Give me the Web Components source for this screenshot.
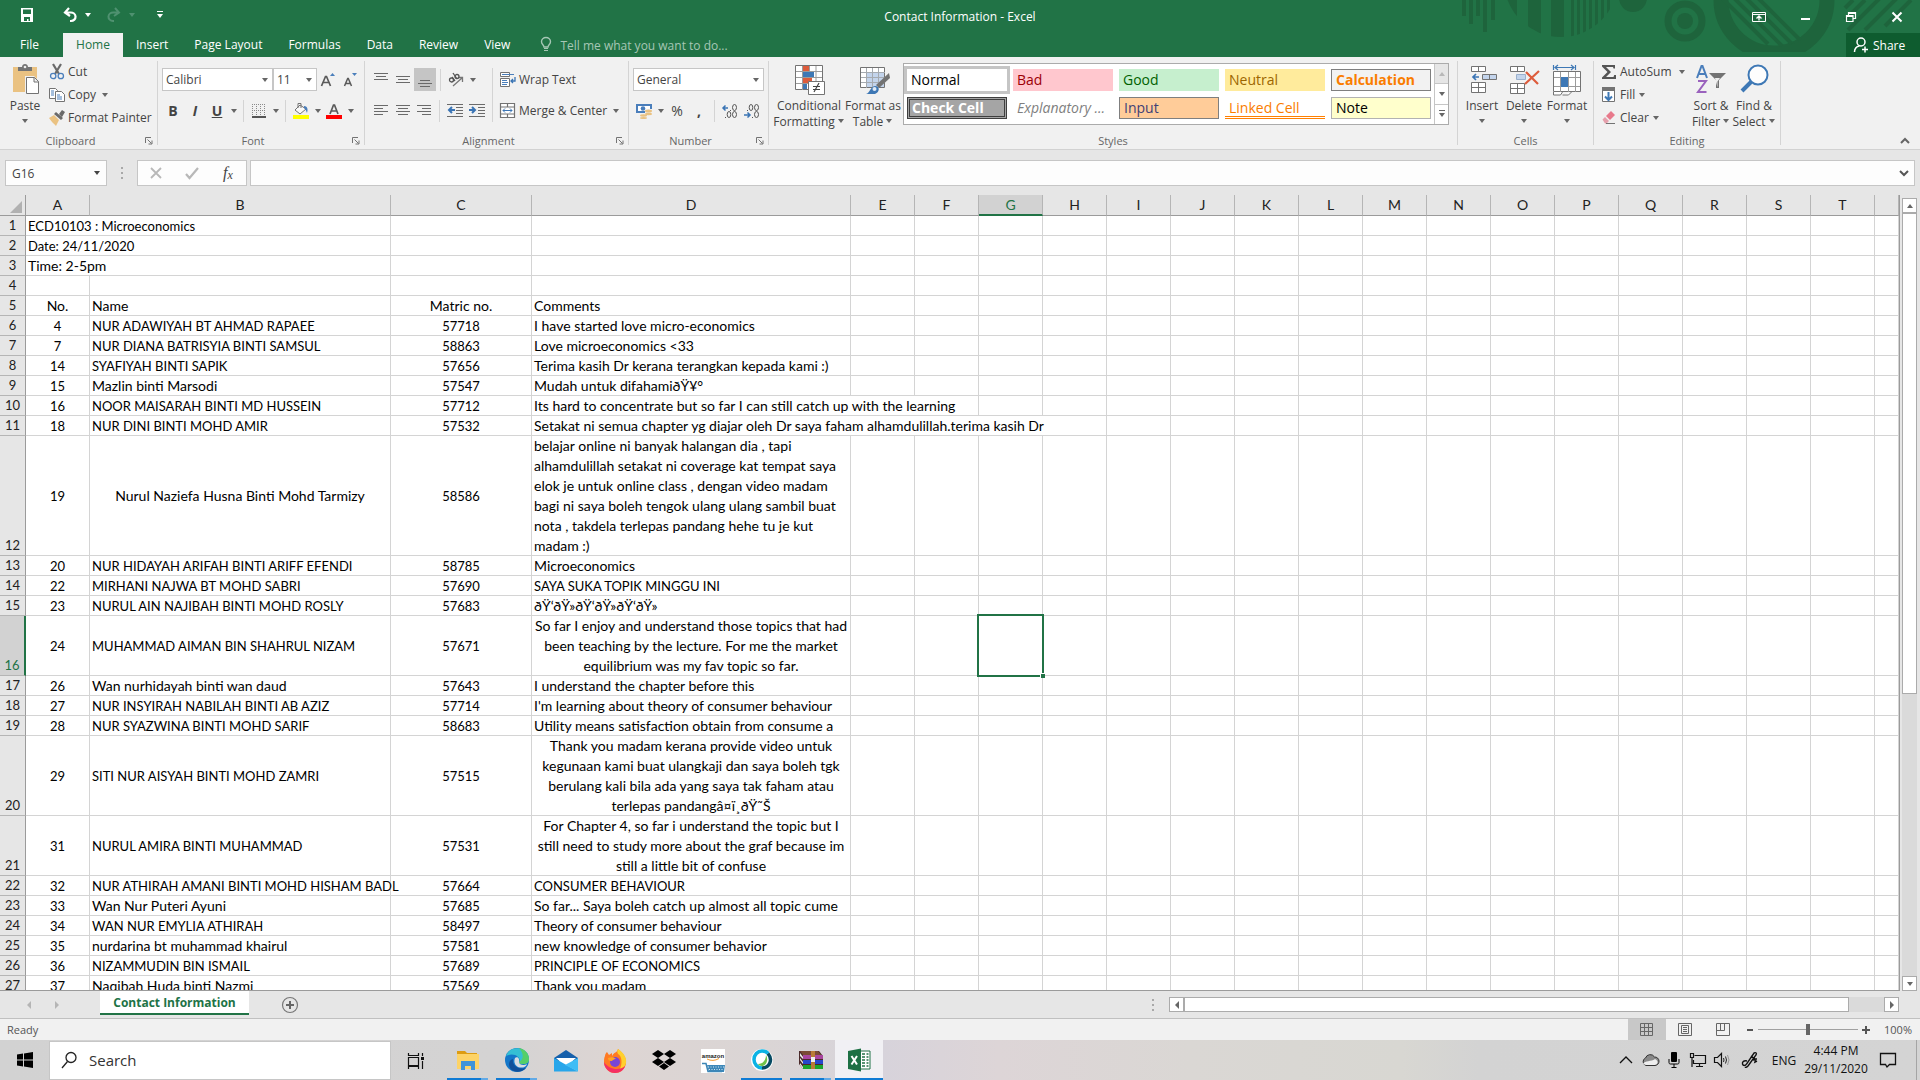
<!DOCTYPE html>
<html lang="en">
<head>
<meta charset="utf-8">
<title>Contact Information - Excel</title>
<style>
  html, body {
    margin: 0;
    height: 100%;
  }

  body {
    font-family: "Open Sans", "Noto Sans", sans-serif;
    font-size: 12px;
    color: #444444;
    overflow: hidden;
  }
</style>
</head>
<body>
<excel-app></excel-app>

<script>
  // ---------- icons ----------

  // name: [width, height, markup]
  const lines = (rows, color = '#6a6a6a') =>
    rows.map(([x, y, w]) => `<rect x="${x}" y="${y}" width="${w}" height="1" fill="${color}"/>`).join('');

  const ICONS = {
    save: [16, 16, '<path d="M2 1h12v14H2z" fill="#fff"/><path d="M4 2.5h8v4.5H4zM5 10h6v4H9.5v-2H8v2H5z" fill="#217346"/>'],
    undo: [16, 16, '<path d="M7 1 3 5.5 8 9M3.5 5.5h5a4.5 4 0 0 1 .5 8.5H8" fill="none" stroke="#fff" stroke-width="2.2"/>'],
    redo: [16, 16, '<path d="m9 1 4 4.5L8 9m4.500-3.500h-5a4.5 4 0 0 0-.5 8.5h1" fill="none" stroke="#4f9170" stroke-width="2"/>'],
    more: [8, 8, '<path d="M1 0h6v1H1zM1 3h6L4 7z" fill="#fff"/>'],
    down: [8, 8, '<path d="M1 2h6L4 6z" fill="currentColor"/>'],
    up: [8, 8, '<path d="M1 6h6L4 2z" fill="currentColor"/>'],
    left: [8, 10, '<path d="M6 1v8L2 5z" fill="currentColor"/>'],
    right: [8, 10, '<path d="M2 1v8l4-4z" fill="currentColor"/>'],
    downline: [8, 8, '<path d="M1 0h6v1H1zM1 3h6L4 7z" fill="#666"/>'],
    bulb: [12, 16, '<path d="M4 10c0-2-2.500-2.500-2.500-5.200a4.5 4.3 0 0 1 9 0C10.5 7.5 8 8 8 10z" fill="none" stroke="#a6c7b5" stroke-width="1.4"/><path d="M4 11h4v1H4zm0 2h4v1H4z" fill="#a6c7b5"/>'],
    ribbonopts: [14, 12, '<path d="M.5 1.5h13v9H.5zM.5 3.5h13" fill="none" stroke="#fff"/><path d="M7 9.5V5.5M4.5 7.5 7 5l2.5 2.5" fill="none" stroke="#fff" stroke-width="1.3"/>'],
    min: [10, 10, '<path d="M1 6h9v2H1z" fill="#fff"/>'],
    restore: [12, 12, '<path d="M3.5 4V1.5h7v6H8M1.5 4.5H8v6H1.5zM1.5 5.5H8M3.5 2.5h7" fill="none" stroke="#fff" stroke-width="1.2"/>'],
    close: [12, 12, '<path d="m1.5 1.5 9 9m0-9-9 9" stroke="#fff" stroke-width="2"/>'],
    share: [16, 16, '<circle cx="8" cy="5" r="4" fill="none" stroke="#fff" stroke-width="1.5"/><path d="M1.5 15c0-3.500 2-5.500 5-6M9 12.5h6M12 9.5v6" fill="none" stroke="#fff" stroke-width="1.5"/>'],
    paste: [32, 32, '<path d="M4 3h24v25H4z" fill="#eac282"/><path d="M9 3h4c0-4 6-4 6 0h4v4H9z" fill="#737373"/><circle cx="16" cy="3" r="1.3" fill="#eee"/><path d="M16 12h9l5 5v14H16z" fill="#f1f1f1"/><path d="M17.5 13.5h8l4 4v12h-12zM25 13.5v4.5h4.5" fill="#fff" stroke="#737373"/>'],
    cut: [16, 16, '<path d="m4 0 6 10M12 0 6 10" stroke="#6a6a6a" stroke-width="2.2"/><circle cx="4.2" cy="12" r="2.7" fill="none" stroke="#4a7ebb" stroke-width="1.3"/><circle cx="11.8" cy="12" r="2.7" fill="none" stroke="#4a7ebb" stroke-width="1.3"/>'],
    copy: [16, 16, '<path d="M.5 1.5h6l2 2v8h-8z" fill="#fff" stroke="#737373"/><path d="M6.5 4.5h6l3 3v7h-9z" fill="#fff" stroke="#737373"/><path d="M2 4h3M2 6h3M2 8h3M8 8h3M8 10h5M8 12h5" stroke="#4a7ebb"/>'],
    painter: [16, 16, '<path d="m0 8 5-3 5 5-3 6C5 14 2 11 0 8z" fill="#eac282"/><path d="m5 4 2-2 7 6-2 2zm5 0 3-4 3 2-3 5z" fill="#6a6a6a"/>'],
    grow: [16, 16, '<path d="M10 4h5l-2.500-3z" fill="#4a7ebb"/><path d="M1.5 14 5.5 4.5h1L10.5 14M3 10.5h6" fill="none" stroke="#5a5a5a" stroke-width="1.7"/>'],
    shrink: [16, 16, '<path d="M10 1h5l-2.500 3z" fill="#4a7ebb"/><path d="M2.5 14 5.7 6.5h.6L9.5 14M3.7 11.5h4.6" fill="none" stroke="#5a5a5a" stroke-width="1.5"/>'],
    borders: [14, 14, '<path d="M.5 0v13M4.5 0v13M8.5 0v13M12.5 0v13M0 .5h13M0 6.5h13" stroke="#8a8a8a" stroke-dasharray="1 1" fill="none"/><path d="M0 13h14" stroke="#555" stroke-width="2"/>'],
    fillcolor: [16, 18, '<path d="M0 13h16v4H0z" fill="#ff0"/><path d="M7 3 2 8l5 4 6-5zM5 6V1.5h3V6" fill="#fafafa" stroke="#737373"/><path d="M11 4c4 0 4 4 3 7-1-2-1-4-3-5z" fill="#4a7ebb"/>'],
    fontcolor: [16, 18, '<path d="M0 13h16v4H0z" fill="#f00"/><path d="M4 12 7.5 3h1L12 12M5.5 9h5" fill="none" stroke="#5a5a5a" stroke-width="1.7"/>'],
    altop: [16, 16, lines([[1, 1, 14], [3, 4, 10], [1, 7, 14]])],
    almid: [16, 16, lines([[1, 4, 14], [3, 7, 10], [1, 10, 14]])],
    albot: [16, 16, lines([[3, 8, 10], [1, 11, 14], [3, 14, 10]])],
    alleft: [16, 16, lines([[1, 2, 14], [1, 5, 9], [1, 8, 14], [1, 11, 9]])],
    alcenter: [16, 16, lines([[1, 2, 14], [3, 5, 10], [1, 8, 14], [3, 11, 10]])],
    alright: [16, 16, lines([[1, 2, 14], [6, 5, 9], [1, 8, 14], [6, 11, 9]])],
    orient: [16, 16, '<path d="m5 14 9-8M10 5.5h4.5V10" fill="none" stroke="#777" stroke-width="1.3"/><g fill="none" stroke="#555" stroke-width="1.3"><circle cx="3.5" cy="8" r="2"/><path d="m4 5 3 4"/><circle cx="9" cy="4.5" r="2"/><path d="m5 1 4 6"/></g>'],
    outdent: [16, 16, lines([[0, 1, 16], [9, 4, 7], [9, 7, 7], [9, 10, 7], [0, 13, 16]]) + '<path d="M8 7H2m3-3L2 7l3 3" fill="none" stroke="#3a74b4" stroke-width="2"/>'],
    indent: [16, 16, lines([[0, 1, 16], [9, 4, 7], [9, 7, 7], [9, 10, 7], [0, 13, 16]]) + '<path d="M0 7h6M3 4l3 3-3 3" fill="none" stroke="#3a74b4" stroke-width="2"/>'],
    wrap: [16, 16, '<path d="M.5.5h9v4h-9zM.5 6.5h9v8h-9z" fill="#fff" stroke="#737373"/><path d="M2 2.5h12M2 8.5h5M2 10.5h6M2 12.5h5" stroke="#4a7ebb"/><path d="M15 5v4h-4m2-2-2 2 2 2" fill="none" stroke="#3a74b4" stroke-width="1.3"/>'],
    merge: [16, 16, '<path d="M.5.5h14v14H.5zM.5 4h14M.5 11h14M7.5.5V4M7.5 11v3.5" fill="#fff" stroke="#737373" stroke-width="1.2"/><path d="M3 7.5h9M5 5.5l-2 2 2 2m5-4 2 2-2 2" fill="none" stroke="#3a74b4"/>'],
    currency: [16, 16, '<path d="M0 1h16v9H0z" fill="#4a7ebb"/><path d="M2 3h12v5H2z" fill="#fff"/><circle cx="7" cy="5.5" r="2.3" fill="#4a7ebb"/><path d="M9 6h7v9H4v-4h5z" fill="#f1f1f1"/><g fill="#eac282"><ellipse cx="12.5" cy="8" rx="3.5" ry="1.5"/><ellipse cx="12.5" cy="11" rx="3.5" ry="1.2"/><ellipse cx="7.5" cy="12.5" rx="3.5" ry="1.2"/><ellipse cx="7.5" cy="15" rx="3.5" ry="1"/></g>'],
    incdec: [16, 16, '<path d="M6 5H1m2.500-2.500L1 5l2.5 2.5" fill="none" stroke="#3a74b4" stroke-width="1.5"/><g fill="none" stroke="#555"><ellipse cx="12.5" cy="4.5" rx="2" ry="3"/><ellipse cx="7" cy="11.5" rx="1.8" ry="3"/><ellipse cx="12.5" cy="11.5" rx="2" ry="3"/></g><path d="M8 7h1v1H8zM3 14h1v1H3z" fill="#555"/>'],
    decdec: [16, 16, '<path d="M0 12h6M3.5 9.5 6 12l-2.500 2.5" fill="none" stroke="#3a74b4" stroke-width="1.5"/><g fill="none" stroke="#555"><ellipse cx="12.5" cy="4.5" rx="2" ry="3"/><ellipse cx="7" cy="4.5" rx="1.8" ry="3"/><ellipse cx="12.5" cy="11.5" rx="2" ry="3"/></g><path d="M3 7h1v1H3zM8 14h1v1H8z" fill="#555"/>'],
    condfmt: [32, 32, '<path d="M2.5 1.5h27v24h-27z" fill="#fff" stroke="#737373"/><path d="M9.5 2v24M16.5 2v24M23 2v24M3 7.5h26M3 13.5h26M3 19.5h26" stroke="#9b9b9b"/><path d="M10 2h6v5h-6zM10 14h9v5h-9z" fill="#dd5c3c"/><path d="M10 8h11v5H10zM10 20h4v5h-4z" fill="#3e78b5"/><path d="M15.5 17.5h16v13h-16z" fill="#fff" stroke="#737373"/><path d="M20 22.5h7M20 25.5h7M26 19l-5 9" stroke="#444" stroke-width="1.2"/>'],
    fmttable: [32, 32, '<path d="M3.5 3.5h24v20h-24z" fill="#fff" stroke="#737373"/><path d="M9 9h18v14H9z" fill="#c3d4ec"/><path d="M9.5 4v20M15.5 4v20M21.5 4v20M4 8.5h24M4 13.5h24M4 18.5h24" stroke="#a5aab0"/><path d="m32 9 1 5-11 10-3-3z" fill="#737373"/><path d="m9 30c4-1 4-7 9-8 5 0 5 6 0 8z" fill="#3e78b5"/><circle cx="17.5" cy="25" r="2" fill="#dfe9f5"/>'],
    insert: [32, 32, '<path d="M5.5 2.5h14v5h-14zM12.5 2.5v5M5.5 18.5h14v10h-14zM12.5 18.5v10M5.5 23.5h14" fill="#fff" stroke="#737373"/><path d="M16.5 10.5h14v5h-14zM23.5 10.5v5" fill="#c3d4ec" stroke="#737373"/><path d="M13 13H7m3-3-3 3 3 3" fill="none" stroke="#3a74b4" stroke-width="1.7"/>'],
    delete: [32, 32, '<path d="M2.5 2.5h14v5h-14zM9.5 2.5v5M2.5 19.5h14v10h-14zM9.5 19.5v10M2.5 24.5h14" fill="#fff" stroke="#737373"/><path d="M8.5 10.5h9v5h-9z" fill="#c3d4ec" stroke="#9ab0cc"/><path d="m18 8 12 12M31 7 17 20" stroke="#dd5c3c" stroke-width="2.2"/>'],
    format: [32, 32, '<path d="M2.5 1v5M24.5 1v5M4 3.5h19M7 1 4 3.5 7 6M20 1l3 2.5L20 6" fill="none" stroke="#3e78b5" stroke-width="1.2"/><path d="M2.5 7.5h27v20h-27z" fill="#fff" stroke="#737373"/><path d="M9.5 8v20M17.5 8v20M24.5 8v20M3 13.5h26M3 22.5h26" stroke="#9b9b9b"/><path d="M10 13h7v10h-7z" fill="#3e78b5"/><path d="M2.5 28v3h7l2-3m0 3h6l3-3" fill="#fff" stroke="#737373"/>'],
    sum: [16, 16, '<path d="M1 1h13v3.5h-1.500L12 3H5l5 5-5 5h7.5l.7-2H15v4H1v-1.500L6.5 8 1 2.5z" fill="#555"/>'],
    fill: [16, 16, '<path d="M1.5 3.5h12v11h-12z" fill="#fff" stroke="#737373"/><path d="M1 0h13v4H1z" fill="#737373"/><path d="M7.5 5v8M4 9.5 7.5 13 11 9.5" fill="none" stroke="#3e78b5" stroke-width="2"/>'],
    clear: [16, 16, '<path d="m5 6 5-5 4 4-5 5z" fill="#e8798b"/><path d="M1.5 9.5 4 7l4 4-2.500 2.5H4z" fill="#e5a0ac"/><path d="M5 13.5h9" stroke="#737373"/>'],
    sort: [32, 32, '<path d="m2 14 4.500-12h1L12 14M3.5 10h7" fill="none" stroke="#4a7ebb" stroke-width="2"/><path d="M3 17h8L3 28h8.5" fill="none" stroke="#9a62bd" stroke-width="2"/><path d="M14 9h17l-7 7v8h-3v-8z" fill="#737373"/><path d="M20 14h5l-2.500 3.5v6" fill="#eee"/>'],
    find: [32, 32, '<circle cx="20" cy="11" r="9.5" fill="#fdfdfd" stroke="#3e78b5" stroke-width="2"/><path d="m13 18-9 9" stroke="#3e78b5" stroke-width="4"/>'],
    launcher: [8, 8, '<path d="M.5 6V.5H6" fill="none" stroke="#737373"/><path d="m2.5 2.5 4 4M7 3.5V7H3.5" fill="none" stroke="#737373"/>'],
    chevup: [10, 8, '<path d="m1 6 4-4 4 4" fill="none" stroke="#666" stroke-width="2"/>'],
    chevdown: [10, 8, '<path d="m1 2 4 4 4-4" fill="none" stroke="#555" stroke-width="2"/>'],
    cancel: [14, 14, '<path d="m2 2 10 10m0-10L2 12" stroke="#b8b8b8" stroke-width="1.8"/>'],
    enter: [14, 14, '<path d="m1 8 3.500 4L13 2" fill="none" stroke="#b8b8b8" stroke-width="2.2"/>'],
    dots: [4, 12, '<path d="M1 0h2v2H1zM1 5h2v2H1zM1 10h2v2H1z" fill="#a8a8a8"/>'],
    corner: [12, 12, '<path d="M12 0v12H0z" fill="#b1b1b1"/>'],
    addsheet: [18, 18, '<circle cx="9" cy="9" r="7.5" fill="none" stroke="#777" stroke-width="1.2"/><path d="M9 5v8M5 9h8" stroke="#666" stroke-width="2"/>'],
    vnormal: [14, 14, '<path d="M.5.5h12v12H.5zM4.5.5v12M8.5.5v12M.5 4.5h12M.5 8.5h12" fill="none" stroke="#666"/>'],
    vlayout: [14, 14, '<path d="M.5.5h13v12H.5zM3.5 2.5h7v8h-7zM5 4.5h4M5 6.5h4M5 8.5h4" fill="none" stroke="#666"/>'],
    vbreak: [14, 14, '<path d="M.5.5h13v12H.5zM.5 7.5h8V.5M4.5.5v7" fill="none" stroke="#666"/>'],
    minus: [8, 8, '<path d="M1 3h6v2H1z" fill="#555"/>'],
    plus: [10, 10, '<path d="M1 4h8v2H1zM4 1h2v8H4z" fill="#555"/>'],

    windows: [16, 16, '<path d="M0 2.5 6 1.6V7.6H0zM7 1.5 16 0v7.6H7zM0 8.5h6v6L0 13.6zM7 8.5h9V16l-9-1.400z" fill="#000"/>'],
    search: [16, 18, '<circle cx="10" cy="6.5" r="5" fill="none" stroke="#222" stroke-width="1.3"/><path d="M6.5 10.5 1 17" stroke="#222" stroke-width="1.3"/>'],
    taskview: [18, 18, '<path d="M1.5 1v2.5h10V1M1.5 5.5h10v8h-10zM1.5 17v-2.500h10V17M15.5 1v3M15.5 9v8" fill="none" stroke="#111" stroke-width="1.2"/><path d="M14 5h3v3h-3z" fill="#111"/>'],
    explorer: [24, 24, '<path d="M1 3h8l2 2h10v15H1z" fill="#dd9c12"/><path d="M1 6h22v15H1z" fill="#fdd367"/><path d="M5 13h14v9h-4v-4H9v4H5z" fill="#3f93d8"/>'],
    edge: [24, 24, '<circle cx="12" cy="12" r="12" fill="#1477c9"/><path d="M1 8C3 2 9-1 15 .6c6 1.6 9 6 9 10.4 0 3-2 5-6 5-3 0-4-1-4-2 1-1 1-3-1-5-3-3-8-3-12-1z" fill="#35bfd4"/><path d="M14 0c6 1 10 6 10 11 0 3-2 5-6 5-3 0-4-1-4-2 6-3 4-10 0-14z" fill="#55cf68"/><path d="M8 11c-1 5 3 11 13 9-4 5-13 5-16 0-2-4-1-8 3-9z" fill="#10509b"/><path d="M10 10c2-2 5 0 4 4 0 3 5 4 8 2-1 3-4 4-7 3.5-4-.5-7-4.500-5-9.500z" fill="#d8dce2"/>'],
    mail: [24, 24, '<path d="m0 9 12-8 12 8v3H0z" fill="#1660ab"/><path d="M2 9h20l-10 9z" fill="#fff"/><path d="M0 9l24 13.5H0z" fill="#27a6ea"/><path d="M24 9 11 16l13 6.5z" fill="#3fbdf5"/>'],
    firefox: [24, 24, '<path d="M2 7c0-2 1-3 2-4l2 3 3-2v3c2-4 5-3 6-7 5 4 8 8 8 13a11 11 0 0 1-22 0c0-2 0-4 1-6z" fill="#ff7a22"/><path d="M15 0c6 4 9 9 8 14-1 4-4 7-7 8 4-7 3-15-1-17-1-2-1-3 0-5z" fill="#ffd02e"/><path d="M1 13c0 6 5 11 11 11 5 0 9-3 10-7-5 5-16 4-21-4z" fill="#f52f63"/><circle cx="12" cy="13" r="5" fill="#7a45d6"/><path d="M5 9c4-1 6-1 8 1-3 0-3 2-5 2s-3-1-3-3z" fill="#ffa421"/>'],
    dropbox: [24, 24, '<path d="m6 1 6 4-6 4-6-4zM18 1l6 4-6 4-6-4zM6 9l6 4-6 4-6-4zM18 9l6 4-6 4-6-4zM12 14l5 3.5-5 3.5-5-3.500z" fill="#000"/>'],
    cart: [24, 24, '<path d="M0 0h24v24H0z" fill="#fff"/><text x="12" y="9" text-anchor="middle" font-size="6" font-weight="bold" font-family="Liberation Sans, sans-serif" fill="#222">amazon</text><path d="M6 10q6 3 12-.5" fill="none" stroke="#f29b2f"/><path d="M1 14.5h4l2 8h14" fill="none" stroke="#3a85b5" stroke-width="1.5"/><path d="M6 16h18l-1 7H8z" fill="#3d87b8"/><path d="M7 18h16M8 20.5h15" stroke="#d5e8f3" stroke-dasharray="1 1.5"/>'],
    webex: [24, 24, '<circle cx="12" cy="12" r="11" fill="#fff"/><path d="M12 20a8 8.500 0 0 1 0-17c3 0 5 1 6 2.500" fill="none" stroke="#0bb3e4" stroke-width="3.5"/><path d="M18 5.500c5 6 2 14-6 14.500" fill="none" stroke="#064a63" stroke-width="3.5"/><path d="M8 16c5 0 8-4 8-9 3 5 0 11-4 11-2 0-3.500-1-4-2z" fill="#70c24a"/>'],
    winrar: [24, 24, '<path d="M0 3h20l4 5v13H4L0 16z" fill="#4b2a2a"/><path d="M1 3h18l3 4H4z" fill="#7a4a35"/><path d="M4 7h20v4H4z" fill="#a8459f"/><path d="M4 12h20v4H4z" fill="#2747cd"/><path d="M4 17h20v4H4z" fill="#1ca52c"/><path d="M1 5l3 4v2L1 8zM1 10l3 4v2l-3-4zM1 15l3 4v2l-3-4z" fill="#eee"/><path d="M12 3h4v18h-4z" fill="#b97b36"/><path d="M12 9h4v5h-4z" fill="#eee"/>'],
    excel: [24, 24, '<path d="M13 3h10v18H13z" fill="#fff" stroke="#217346"/><path d="M15 6h3M15 9h3M15 12h3M15 15h3M15 18h3M19.5 6h2M19.5 9h2M19.5 12h2M19.5 15h2M19.5 18h2" stroke="#217346" stroke-width="1.5"/><path d="M1 3 14 .5v23L1 21z" fill="#1d7044"/><path d="m4.5 8 5.5 8.5M10 8 4.5 16.5" stroke="#fff" stroke-width="2"/>'],
    trayup: [14, 10, '<path d="m1 8 6-6 6 6" fill="none" stroke="#111" stroke-width="1.3"/>'],
    cloud: [18, 14, '<path d="M5 12.5a4 4 0 0 1-.5-7.500 5 5 0 0 1 9-1 4 4 0 0 1 .5 8.5z" fill="#8a8a8a" stroke="#333"/><path d="M2 11c2-4 8-2 12-5 4 2 3 5 0 6H5z" fill="#eee"/>'],
    mic: [12, 16, '<rect x="3" y="0" width="6" height="10" rx="1" fill="#000"/><path d="M1 7v3.5c0 1 .5 1.5 1.5 1.5h7c1 0 1.500-.5 1.500-1.500V7M6 12v3M3.5 15.5h5" fill="none" stroke="#000"/>'],
    network: [18, 16, '<path d="M5.5 3.5h11v8h-12V8M10.5 12v2.5M7 14.5h7M1.5 1.5h3v4h-3zM3 5.5V15" fill="none" stroke="#111" stroke-width="1.2"/>'],
    sound: [18, 16, '<path d="M1.5 5.5h3l4-4v13l-4-4h-3z" fill="none" stroke="#111" stroke-width="1.2"/><path d="M10.5 6q1 2 0 4M12.5 4.5q2 3.5 0 7" fill="none" stroke="#222"/><path d="M14.5 3q3 5 0 10" fill="none" stroke="#999"/>'],
    pen: [18, 18, '<path d="M6 10c-3-1-5 1-4.500 3 .5 2 3 2 4 0L13 2c2-1 3 0 2 2L7 15q-2 2-3 1M10 5l4 3 2 0M12 9q3-1 2 2l2-1" fill="none" stroke="#111" stroke-width="1.4"/>'],
    notice: [18, 18, '<path d="M1.5 2.5h15v11h-6L8 16l-1.500-2.500h-5z" fill="none" stroke="#111" stroke-width="1.3"/>']
  };

  class UiIcon extends HTMLElement {
    constructor() {
      super();
      this.attachShadow({ mode: 'open' });
    }

    connectedCallback() {
      const [w, h, body] = ICONS[this.getAttribute('name')];
      this.shadowRoot.innerHTML = `
        <style>
          :host { display: inline-flex; flex: none; }
          svg { display: block; overflow: visible; }
        </style>
        <svg width="${w}" height="${h}" viewBox="0 0 ${w} ${h}" aria-hidden="true">${body}</svg>`;
    }
  }
  customElements.define('ui-icon', UiIcon);

  const CONTROLS = `
    * { box-sizing: border-box; }
    button, input, select, a {
      font: inherit; color: inherit; background: none; border: 0;
      margin: 0; padding: 0; border-radius: 0; outline: none; text-decoration: none;
    }
    button { display: flex; align-items: center; justify-content: center; white-space: nowrap; }
    select { appearance: none; }
  `;

  // for the parts that only have markup and styles
  const define = (name, html) => {
    const template = document.createElement('template');
    template.innerHTML = html.replace('<style>', '<style>' + CONTROLS);
    customElements.define(name, class extends HTMLElement {
      constructor() {
        super();
        this.attachShadow({ mode: 'open' }).appendChild(template.content.cloneNode(true));
      }
    });
  };

  // ---------- title bar and tabs ----------

  define('excel-header', `
    <style>
      :host { display: block; position: relative; background: #217346; color: #fff; flex: none; }
      .art { position: absolute; top: 0; right: 0; }
      .title, .tabs { display: flex; align-items: center; position: relative; }
      .title { height: 33px; display: grid; grid-template-columns: 1fr auto 1fr; }
      .quick { display: flex; align-items: center; padding: 0 0 4px 19px; height: 33px; }
      .quick button { height: 22px; }
      .quick .arrow { width: 20px; }
      .window { display: flex; justify-content: flex-end; }
      .window button { width: 46px; height: 30px; }
      .tabs { height: 24px; }
      .tabs a { height: 24px; line-height: 24px; padding: 0 13px; text-align: center; }
      .tabs .file { width: 59px; margin-right: 4px; }
      .tabs .on { width: 60px; padding: 0; background: #f1f1f1; color: #217346; }
      nav { display: flex; }
      .tell { display: flex; align-items: center; gap: 8px; padding-left: 17px; flex: 1; }
      .tell input { width: 200px; }
      .tell input::placeholder { color: #a6c7b5; opacity: 1; }
      .share { background: #0e5c2f; width: 74px; height: 24px; gap: 4px; justify-content: flex-start; padding-left: 7px; }
    </style>
    <svg class="art" width="480" height="57" viewBox="0 0 480 57" aria-hidden="true">
      <defs>
        <clipPath id="disc"><circle cx="121" cy="-20" r="57"/></clipPath>
        <clipPath id="bowl"><circle cx="334" cy="-6" r="53"/></clipPath>
        <clipPath id="top"><path d="M260 0h150v52H260z"/></clipPath>
      </defs>
      <g fill="#1e643c">
        <path d="M22 0h4v16h-4zM29 0h4v24h-4zM36 0h4v16h-4zM43 0h4v32h-4zM51 0h4v20h-4z"/>
        <path clip-path="url(#disc)" d="M60 0h17v40H60zM88 0h13v40H88zM111 0h13v40h-13zM131 0h3v40h-3zM137 0h3v40h-3zM143 0h3v40h-3zM149 0h3v40h-3zM155 0h3v40h-3zM161 0h3v40h-3zM167 0h3v40h-3z"/>
        <circle cx="193" cy="-2" r="14"/>
        <circle cx="245" cy="21" r="8"/>
      </g>
      <g fill="none" stroke="#1e643c">
        <circle cx="245" cy="21" r="17" stroke-width="7"/>
        <circle cx="334" cy="0" r="53" stroke-width="15" clip-path="url(#top)"/>
        <path clip-path="url(#bowl)" d="m278-6 50 50M290-6l52 52M300-8l56 56M308-12l56 56" stroke-width="4"/>
        <path d="m405 8 8-8M405 20l20-20M408 30l32-32M425 30l32-32M445 26l26-26" stroke-width="4"/>
      </g>
    </svg>
    <div class="title">
      <div class="quick">
        <button aria-label="Save"><ui-icon name="save"></ui-icon></button>
        <button aria-label="Undo" style="margin-left: 27px"><ui-icon name="undo"></ui-icon></button>
        <button aria-label="Undo list" class="arrow"><ui-icon name="down"></ui-icon></button>
        <button aria-label="Redo" style="margin-left: 8px"><ui-icon name="redo"></ui-icon></button>
        <button aria-label="Redo list" class="arrow" style="color: #4f9170"><ui-icon name="down"></ui-icon></button>
        <button aria-label="Customize" style="margin-left: 14px"><ui-icon name="more"></ui-icon></button>
      </div>
      <span>Contact Information - Excel</span>
      <div class="window">
        <button aria-label="Ribbon display options"><ui-icon name="ribbonopts"></ui-icon></button>
        <button aria-label="Minimize"><ui-icon name="min"></ui-icon></button>
        <button aria-label="Restore"><ui-icon name="restore"></ui-icon></button>
        <button aria-label="Close"><ui-icon name="close"></ui-icon></button>
      </div>
    </div>
    <div class="tabs">
      <nav>
        <a href="#file" class="file">File</a><a href="#home" class="on">Home</a><a href="#insert">Insert</a>
        <a href="#layout">Page Layout</a><a href="#formulas">Formulas</a><a href="#data">Data</a>
        <a href="#review">Review</a><a href="#view">View</a>
      </nav>
      <label class="tell"><ui-icon name="bulb"></ui-icon><input placeholder="Tell me what you want to do..." aria-label="Tell me"></label>
      <button class="share"><ui-icon name="share"></ui-icon>Share</button>
    </div>
  `);

  // ---------- ribbon ----------

  define('ribbon-group', `
    <style>
      :host { display: flex; flex: none; height: 92px; }
      .main { flex: 1; display: flex; flex-direction: column; }
      .body { height: 76px; display: flex; }
      .foot { height: 16px; display: grid; grid-template-columns: 1fr; align-items: center; text-align: center; color: #666; font-size: 11px; line-height: 16px; }
      .foot button { height: 8px; }
      :host([launcher]) .foot { grid-template-columns: 1fr 16px; }
      :host(:not([launcher])) .foot button { display: none; }
      .sep { width: 1px; margin: 4px 0; background: #d4d4d4; }
    </style>
    <div class="main">
      <div class="body"><slot></slot></div>
      <div class="foot"><span><slot name="label"></slot></span><button aria-label="More options"><ui-icon name="launcher"></ui-icon></button></div>
    </div>
    <div class="sep"></div>
  `);

  // drop-down with its own arrow
  class UiSelect extends HTMLElement {
    constructor() {
      super();
      this.attachShadow({ mode: 'open' });
    }

    connectedCallback() {
      this.shadowRoot.innerHTML = `
        <style>
          ${CONTROLS}
          :host { display: grid; height: 23px; border: 1px solid #c6c6c6; background: #fff; box-sizing: border-box; }
          select, ui-icon { grid-area: 1 / 1; }
          select { width: 100%; padding-left: 3px; color: #444; }
          ui-icon { justify-self: end; align-self: center; margin-right: 3px; pointer-events: none; color: #666; }
        </style>
        <select aria-label="${this.getAttribute('label')}"><option>${this.getAttribute('value')}</option></select>
        <ui-icon name="down"></ui-icon>`;
    }
  }
  customElements.define('ui-select', UiSelect);

  define('excel-ribbon', `
    <style>
      :host { display: flex; background: #f1f1f1; border-bottom: 1px solid #d2d2d2; flex: none; color: #444; }
      .col { display: flex; flex-direction: column; }
      .row { display: flex; align-items: center; height: 23px; }
      .two { padding-top: 11px; gap: 8px; }
      .three { padding-top: 3px; }
      .big { flex-direction: column; justify-content: flex-start; padding-top: 7px; height: 76px; line-height: 16px; }
      .big ui-icon:first-child { margin-bottom: 2px; }
      .big span { display: flex; align-items: center; height: 16px; gap: 2px; }
      .small { gap: 3px; padding: 0 3px; height: 23px; }
      .t { width: 22px; height: 23px; font-size: 14px; }
      .a { width: 11px; height: 23px; }
      .on { background: #c5c5c5; }
      .v { width: 1px; height: 22px; margin: 0 4px; background: #d4d4d4; }
      ui-icon[name=down] { color: #666; }
      .gallery { display: flex; width: 546px; height: 62px; margin: 6px 0 0 2px; border: 1px solid #ababab; background: #fff; }
      .styles { flex: 1; display: grid; grid-template-columns: repeat(5, 106px); grid-template-rows: 28px 28px; padding-top: 2px; }
      .styles button { justify-content: flex-start; height: 22px; margin: 3px; padding-left: 4px; font-size: 14px; line-height: 16px; }
      .styles .sel { height: 28px; margin: 0; border: 3px solid #c5c5c5; }
      .scroll { display: flex; flex-direction: column; width: 15px; border-left: 1px solid #c6c6c6; }
      .scroll button { flex: 1; color: #666; }
      .scroll button + button { border-top: 1px solid #c6c6c6; }
      .end { flex: 1; display: flex; justify-content: flex-end; align-items: flex-end; padding: 0 10px 4px 0; }
    </style>

    <ribbon-group launcher style="width: 158px">
      <button class="big" style="width: 40px; margin-left: 5px"><ui-icon name="paste"></ui-icon><span>Paste</span><span><ui-icon name="down"></ui-icon></span></button>
      <div class="col three" style="margin-left: 1px">
        <div class="row"><button class="small"><ui-icon name="cut"></ui-icon>Cut</button></div>
        <div class="row"><button class="small"><ui-icon name="copy"></ui-icon>Copy</button><button class="a" aria-label="Copy options"><ui-icon name="down"></ui-icon></button></div>
        <div class="row"><button class="small"><ui-icon name="painter"></ui-icon>Format Painter</button></div>
      </div>
      <span slot="label">Clipboard</span>
    </ribbon-group>

    <ribbon-group launcher style="width: 207px">
      <div class="col two" style="padding-left: 4px">
        <div class="row">
          <ui-select label="Font" value="Calibri" style="width: 111px"></ui-select><ui-select label="Font size" value="11" style="width: 44px"></ui-select>
          <button class="t" aria-label="Increase font size"><ui-icon name="grow"></ui-icon></button>
          <button class="t" aria-label="Decrease font size"><ui-icon name="shrink"></ui-icon></button>
        </div>
        <div class="row">
          <button class="t"><b>B</b></button>
          <button class="t"><b><i>I</i></b></button>
          <button class="t"><b><u>U</u></b></button>
          <button class="a" aria-label="Underline options"><ui-icon name="down"></ui-icon></button>
          <div class="v"></div>
          <button class="t" aria-label="Borders"><ui-icon name="borders"></ui-icon></button>
          <button class="a" aria-label="Border options"><ui-icon name="down"></ui-icon></button>
          <div class="v"></div>
          <button class="t" aria-label="Fill color"><ui-icon name="fillcolor"></ui-icon></button>
          <button class="a" aria-label="Fill color options"><ui-icon name="down"></ui-icon></button>
          <button class="t" aria-label="Font color"><ui-icon name="fontcolor"></ui-icon></button>
          <button class="a" aria-label="Font color options"><ui-icon name="down"></ui-icon></button>
        </div>
      </div>
      <span slot="label">Font</span>
    </ribbon-group>

    <ribbon-group launcher style="width: 264px">
      <div class="col two" style="padding-left: 5px; width: 123px">
        <div class="row">
          <button class="t" aria-label="Top align"><ui-icon name="altop"></ui-icon></button>
          <button class="t" aria-label="Middle align"><ui-icon name="almid"></ui-icon></button>
          <button class="t on" aria-label="Bottom align"><ui-icon name="albot"></ui-icon></button>
          <div class="v"></div>
          <button class="t" aria-label="Orientation"><ui-icon name="orient"></ui-icon></button>
          <button class="a" aria-label="Orientation options"><ui-icon name="down"></ui-icon></button>
        </div>
        <div class="row">
          <button class="t" aria-label="Align left"><ui-icon name="alleft"></ui-icon></button>
          <button class="t" aria-label="Center"><ui-icon name="alcenter"></ui-icon></button>
          <button class="t" aria-label="Align right"><ui-icon name="alright"></ui-icon></button>
          <div class="v"></div>
          <button class="t" aria-label="Decrease indent"><ui-icon name="outdent"></ui-icon></button>
          <button class="t" aria-label="Increase indent"><ui-icon name="indent"></ui-icon></button>
        </div>
      </div>
      <div class="v" style="height: 54px; margin-top: 11px"></div>
      <div class="col two">
        <div class="row"><button class="small"><ui-icon name="wrap"></ui-icon>Wrap Text</button></div>
        <div class="row"><button class="small"><ui-icon name="merge"></ui-icon>Merge &amp; Center</button><button class="a" aria-label="Merge options"><ui-icon name="down"></ui-icon></button></div>
      </div>
      <span slot="label">Alignment</span>
    </ribbon-group>

    <ribbon-group launcher style="width: 140px">
      <div class="col two" style="padding-left: 4px">
        <ui-select label="Number format" value="General" style="width: 131px"></ui-select>
        <div class="row">
          <button class="t" aria-label="Accounting format"><ui-icon name="currency"></ui-icon></button>
          <button class="a" aria-label="Accounting options"><ui-icon name="down"></ui-icon></button>
          <button class="t">%</button>
          <button class="t"><b>,</b></button>
          <div class="v"></div>
          <button class="t" aria-label="Increase decimal"><ui-icon name="incdec"></ui-icon></button>
          <button class="t" aria-label="Decrease decimal"><ui-icon name="decdec"></ui-icon></button>
        </div>
      </div>
      <span slot="label">Number</span>
    </ribbon-group>

    <ribbon-group style="width: 689px">
      <button class="big" style="width: 72px; margin-left: 4px"><ui-icon name="condfmt"></ui-icon><span>Conditional</span><span>Formatting <ui-icon name="down"></ui-icon></span></button>
      <button class="big" style="width: 56px"><ui-icon name="fmttable"></ui-icon><span>Format as</span><span>Table <ui-icon name="down"></ui-icon></span></button>
      <div class="gallery">
        <div class="styles">
          <button class="sel" style="color: #000">Normal</button>
          <button style="background: #ffc7ce; color: #9c0006">Bad</button>
          <button style="background: #c6efce; color: #006100">Good</button>
          <button style="background: #ffeb9c; color: #9c6500">Neutral</button>
          <button style="background: #f2f2f2; color: #fa7d00; border: 1px solid #7f7f7f; font-weight: 700">Calculation</button>
          <button style="background: #a5a5a5; color: #fff; border: 3px double #3f3f3f; padding-left: 2px; font-weight: 700">Check Cell</button>
          <button style="color: #7f7f7f; font-style: italic">Explanatory ...</button>
          <button style="background: #ffcc99; color: #3f3f76; border: 1px solid #7f7f7f">Input</button>
          <button style="color: #fa7d00; border-bottom: 3px double #ff8001; padding-top: 3px">Linked Cell</button>
          <button style="background: #ffffcc; color: #000; border: 1px solid #b2b2b2">Note</button>
        </div>
        <div class="scroll">
          <button aria-label="Previous styles" style="background: #e6e6e6; color: #b8b8b8"><ui-icon name="up"></ui-icon></button>
          <button aria-label="Next styles"><ui-icon name="down"></ui-icon></button>
          <button aria-label="All styles"><ui-icon name="downline"></ui-icon></button>
        </div>
      </div>
      <span slot="label">Styles</span>
    </ribbon-group>

    <ribbon-group style="width: 136px">
      <button class="big" style="width: 42px; margin-left: 3px"><ui-icon name="insert"></ui-icon><span>Insert</span><span><ui-icon name="down"></ui-icon></span></button>
      <button class="big" style="width: 42px"><ui-icon name="delete"></ui-icon><span>Delete</span><span><ui-icon name="down"></ui-icon></span></button>
      <button class="big" style="width: 44px"><ui-icon name="format"></ui-icon><span>Format</span><span><ui-icon name="down"></ui-icon></span></button>
      <span slot="label">Cells</span>
    </ribbon-group>

    <ribbon-group style="width: 187px">
      <div class="col three" style="width: 92px; margin-left: 4px; padding-right: 3px">
        <div class="row" style="justify-content: space-between"><button class="small"><ui-icon name="sum"></ui-icon>AutoSum</button><button class="a" aria-label="AutoSum options"><ui-icon name="down"></ui-icon></button></div>
        <div class="row"><button class="small"><ui-icon name="fill"></ui-icon>Fill <ui-icon name="down"></ui-icon></button></div>
        <div class="row"><button class="small"><ui-icon name="clear"></ui-icon>Clear <ui-icon name="down"></ui-icon></button></div>
      </div>
      <button class="big" style="width: 42px"><ui-icon name="sort"></ui-icon><span>Sort &amp;</span><span>Filter <ui-icon name="down"></ui-icon></span></button>
      <button class="big" style="width: 44px"><ui-icon name="find"></ui-icon><span>Find &amp;</span><span>Select <ui-icon name="down"></ui-icon></span></button>
      <span slot="label">Editing</span>
    </ribbon-group>

    <div class="end"><button aria-label="Collapse the ribbon"><ui-icon name="chevup"></ui-icon></button></div>
  `);

  define('formula-bar', `
    <style>
      :host { display: flex; align-items: center; flex: none; background: #e6e6e6; padding: 10px 5px 9px; height: 45px; box-sizing: border-box; }
      .box { display: flex; align-items: center; height: 26px; border: 1px solid #c6c6c6; background: #fdfdfd; color: #444; }
      .name { width: 102px; padding: 0 5px 0 6px; }
      .name input { flex: 1; min-width: 0; }
      .handle { width: 30px; display: flex; justify-content: center; }
      .tools { width: 110px; margin-right: 3px; }
      .tools button { flex: 1; font: italic 16px "Liberation Serif", serif; color: #444; }
      .tools small { font-size: 12px; padding-top: 4px; }
      .formula { flex: 1; padding: 0 5px; }
      .formula input { flex: 1; }
    </style>
    <div class="box name"><input value="G16" aria-label="Name box"><button aria-label="Names"><ui-icon name="down"></ui-icon></button></div>
    <div class="handle"><ui-icon name="dots"></ui-icon></div>
    <div class="box tools">
      <button aria-label="Cancel"><ui-icon name="cancel"></ui-icon></button>
      <button aria-label="Enter"><ui-icon name="enter"></ui-icon></button>
      <button aria-label="Insert function">f<small>x</small></button>
    </div>
    <div class="box formula"><input aria-label="Formula"><button aria-label="Expand formula bar"><ui-icon name="chevdown"></ui-icon></button></div>
  `);

  // ---------- sheet ----------

  // [A, B, C, D, options]
  const ROWS = [
    ['ECD10103 : Microeconomics', null, '', '', { wide: true, tight: true }],
    ['Date: 24/11/2020', null, '', '', { wide: true, tight: true }],
    ['Time: 2-5pm', null, '', '', { wide: true }],
    ['', '', '', ''],
    ['No.', 'Name', 'Matric no.', 'Comments'],
    ['4', 'NUR ADAWIYAH BT AHMAD RAPAEE', '57718', 'I have started love micro-economics'],
    ['7', 'NUR DIANA BATRISYIA BINTI SAMSUL', '58863', 'Love microeconomics <33'],
    ['14', 'SYAFIYAH BINTI SAPIK', '57656', 'Terima kasih Dr kerana terangkan kepada kami :)'],
    ['15', 'Mazlin binti Marsodi', '57547', 'Mudah untuk difahamiðŸ¥°'],
    ['16', 'NOOR MAISARAH BINTI MD HUSSEIN', '57712', 'Its hard to concentrate but so far I can still catch up with the learning', { span: 3 }],
    ['18', 'NUR DINI BINTI MOHD AMIR', '57532', 'Setakat ni semua chapter yg diajar oleh Dr saya faham alhamdulillah.terima kasih Dr', { span: 5 }],
    ['19', 'Nurul Naziefa Husna Binti Mohd Tarmizy', '58586', 'belajar online ni banyak halangan dia , tapi\nalhamdulillah setakat ni coverage kat tempat saya\nelok je untuk online class , dengan video madam\nbagi ni saya boleh tengok ulang ulang sambil buat\nnota , takdela terlepas pandang hehe tu je kut\nmadam :)', { centerName: true }],
    ['20', 'NUR HIDAYAH ARIFAH BINTI ARIFF EFENDI', '58785', 'Microeconomics'],
    ['22', 'MIRHANI NAJWA BT MOHD SABRI', '57690', 'SAYA SUKA TOPIK MINGGU INI'],
    ['23', 'NURUL AIN NAJIBAH BINTI MOHD ROSLY', '57683', 'ðŸ‘ðŸ»ðŸ‘ðŸ»ðŸ‘ðŸ»'],
    ['24', 'MUHAMMAD AIMAN BIN SHAHRUL NIZAM', '57671', 'So far I enjoy and understand those topics that had\nbeen teaching by the lecture. For me the market\nequilibrium was my fav topic so far.', { center: true }],
    ['26', 'Wan nurhidayah binti wan daud', '57643', 'I understand the chapter before this'],
    ['27', 'NUR INSYIRAH NABILAH BINTI AB AZIZ', '57714', "I'm learning about theory of consumer behaviour"],
    ['28', 'NUR SYAZWINA BINTI MOHD SARIF', '58683', 'Utility means satisfaction obtain from consume a'],
    ['29', 'SITI NUR AISYAH BINTI MOHD ZAMRI', '57515', 'Thank you madam kerana provide video untuk\nkegunaan kami buat ulangkaji dan saya boleh tgk\nberulang kali bila ada yang saya tak faham atau\nterlepas pandangâ¤ï¸ðŸ˜Š', { center: true }],
    ['31', 'NURUL AMIRA BINTI MUHAMMAD', '57531', 'For Chapter 4, so far i understand the topic but I\nstill need to study more about the graf because im\nstill a little bit of confuse', { center: true }],
    ['32', 'NUR ATHIRAH AMANI BINTI MOHD HISHAM BADL', '57664', 'CONSUMER BEHAVIOUR'],
    ['33', 'Wan Nur Puteri Ayuni', '57685', 'So far... Saya boleh catch up almost all topic cume'],
    ['34', 'WAN NUR EMYLIA ATHIRAH', '58497', 'Theory of consumer behaviour'],
    ['35', 'nurdarina bt muhammad khairul', '57581', 'new knowledge of consumer behavior'],
    ['36', 'NIZAMMUDIN BIN ISMAIL', '57689', 'PRINCIPLE OF ECONOMICS'],
    ['37', 'Naqibah Huda binti Nazmi', '57569', 'Thank you madam']
  ];

  const COLS = 'ABCDEFGHIJKLMNOPQRST'.split('');
  const ACTIVE = { col: 'G', row: 16 };

  class SheetGrid extends HTMLElement {
    constructor() {
      super();
      this.attachShadow({ mode: 'open' });
    }

    cell(text, cls = '', span = 1) {
      const td = document.createElement('td');
      td.className = cls;
      // capitals and digits are wide in this face
      if (text === text.toUpperCase()) td.classList.add('tight');
      if (span > 1) td.colSpan = span;
      const div = document.createElement('div');
      div.textContent = text;
      td.appendChild(div);
      return td;
    }

    row(data, n) {
      const [a, b, c, d, opt = {}] = data;
      const tr = document.createElement('tr');
      const th = document.createElement('th');
      th.scope = 'row';
      th.textContent = n;
      if (n === ACTIVE.row) th.className = 'active';
      tr.appendChild(th);
      if (opt.wide) {
        tr.appendChild(this.cell(a, opt.tight ? 'tight' : '', 2));
      } else {
        tr.appendChild(this.cell(a, 'c'));
        tr.appendChild(this.cell(b, opt.centerName ? 'c' : ''));
      }
      tr.appendChild(this.cell(c, 'c'));
      const span = opt.span || 1;
      tr.appendChild(this.cell(d, opt.center ? 'c' : '', span));
      COLS.slice(3 + span).forEach((col) => {
        const td = document.createElement('td');
        if (n === ACTIVE.row && col === ACTIVE.col) td.className = 'cursor';
        tr.appendChild(td);
      });
      tr.appendChild(document.createElement('td'));
      return tr;
    }

    connectedCallback() {
      this.shadowRoot.innerHTML = `
        <style>
          :host { display: block; overflow: hidden; background: #fff; border-right: 1px solid #9b9b9b; border-bottom: 1px solid #9b9b9b; }
          table { width: 100%; table-layout: fixed; border-collapse: separate; border-spacing: 0; color: #000; font: 14px/20px Lato, "Open Sans", sans-serif; }
          th { font-weight: 400; font-size: 14px; padding: 0; background: #e6e6e6; color: #222; box-sizing: border-box; }
          thead th { height: 21px; line-height: 20px; border-right: 1px solid #b5b5b5; border-bottom: 1px solid #9b9b9b; }
          thead th.active { background: #d2d2d2; color: #217346; border-bottom: 2px solid #217346; line-height: 19px; }
          thead th:first-child { border-right-color: #9b9b9b; }
          thead ui-icon { display: flex; justify-content: flex-end; padding: 4px 3px 0 0; }
          tbody th { vertical-align: bottom; line-height: 19px; font-size: 13px; border-right: 1px solid #9b9b9b; border-bottom: 1px solid #b5b5b5; }
          tbody th.active { background: #d2d2d2; color: #217346; border-right: 2px solid #217346; }
          td { height: 19px; padding: 0 2px; border-right: 1px solid #d4d4d4; border-bottom: 1px solid #d4d4d4; vertical-align: middle; }
          td div { white-space: pre; margin-bottom: -1px; }
          .c { text-align: center; }
          .tight { font-size: 13px; }
          .cursor { position: relative; }
          .cursor::before { content: ""; position: absolute; inset: -2px; border: 2px solid #217346; }
          .cursor::after { content: ""; position: absolute; right: -3px; bottom: -3px; width: 4px; height: 4px; background: #217346; border: 1px solid #fff; border-width: 1px 0 0 1px; }
        </style>
        <table>
          <colgroup>
            <col style="width: 26px"><col style="width: 64px"><col style="width: 301px"><col style="width: 141px"><col style="width: 319px">
            ${COLS.slice(4).map(() => '<col style="width: 64px">').join('')}<col>
          </colgroup>
          <thead><tr><th><ui-icon name="corner"></ui-icon></th>${COLS.map((c) => `<th scope="col"${c === ACTIVE.col ? ' class="active"' : ''}>${c}</th>`).join('')}<th></th></tr></thead>
          <tbody></tbody>
        </table>`;
      const body = this.shadowRoot.querySelector('tbody');
      ROWS.forEach((data, i) => body.appendChild(this.row(data, i + 1)));
    }
  }
  customElements.define('sheet-grid', SheetGrid);

  define('sheet-view', `
    <style>
      :host { display: grid; grid-template-columns: 1fr 20px; grid-template-rows: minmax(0, 1fr); flex: 1; min-height: 0; background: #e6e6e6; }
      sheet-grid { min-height: 0; }
      .scroll { display: flex; flex-direction: column; padding: 3px 3px 0 2px; min-height: 0; }
      .scroll button { height: 15px; flex: none; background: #fff; border: 1px solid #ababab; color: #666; }
      .track { flex: 1; background: #dadada; }
      .thumb { height: 63%; background: #fff; border: 1px solid #ababab; }
    </style>
    <sheet-grid></sheet-grid>
    <div class="scroll">
      <button aria-label="Scroll up"><ui-icon name="up"></ui-icon></button>
      <div class="track"><div class="thumb"></div></div>
      <button aria-label="Scroll down"><ui-icon name="down"></ui-icon></button>
    </div>
  `);

  define('sheet-tabs', `
    <style>
      :host { display: flex; align-items: center; flex: none; height: 28px; box-sizing: border-box; background: #e6e6e6; border-bottom: 1px solid #c0c0c0; color: #b5b5b5; }
      .nav { width: 28px; height: 26px; }
      .tab { align-self: flex-start; margin-left: 29px; width: 149px; height: 24px; background: #fff; color: #217346; font-weight: 700; border-bottom: 2px solid #217346; }
      .add { margin-left: 32px; }
      .dots { margin-left: auto; }
      .scroll { display: flex; width: 730px; height: 15px; margin: 0 21px 0 14px; background: #dadada; color: #666; }
      .scroll button { width: 15px; background: #fff; border: 1px solid #ababab; }
      .thumb { width: 665px; background: #fff; border: 1px solid #ababab; }
      .scroll button:last-child { margin-left: auto; }
    </style>
    <button class="nav" aria-label="Previous sheet" style="margin-left: 15px"><ui-icon name="left"></ui-icon></button>
    <button class="nav" aria-label="Next sheet"><ui-icon name="right"></ui-icon></button>
    <button class="tab">Contact Information</button>
    <button class="add" aria-label="New sheet"><ui-icon name="addsheet"></ui-icon></button>
    <ui-icon class="dots" name="dots"></ui-icon>
    <div class="scroll">
      <button aria-label="Scroll left"><ui-icon name="left"></ui-icon></button>
      <div class="thumb"></div>
      <button aria-label="Scroll right"><ui-icon name="right"></ui-icon></button>
    </div>
  `);

  define('status-bar', `
    <style>
      :host { display: flex; align-items: center; flex: none; height: 21px; background: #f1f1f1; color: #555; font-size: 11px; padding: 0 8px 0 7px; box-sizing: border-box; }
      .ready { flex: 1; }
      .view { width: 38px; height: 21px; }
      .on { background: #c8c8c8; }
      .z { width: 16px; height: 21px; }
      input { appearance: none; width: 100px; height: 21px; }
      input::-webkit-slider-runnable-track { height: 1px; background: #a0a0a0; }
      input::-webkit-slider-thumb { appearance: none; width: 4px; height: 11px; margin-top: -5px; background: #666; }
      .pct { width: 38px; justify-content: flex-end; }
    </style>
    <span class="ready">Ready</span>
    <button class="view on" aria-label="Normal view"><ui-icon name="vnormal"></ui-icon></button>
    <button class="view" aria-label="Page layout view"><ui-icon name="vlayout"></ui-icon></button>
    <button class="view" aria-label="Page break preview"><ui-icon name="vbreak"></ui-icon></button>
    <button class="z" aria-label="Zoom out"><ui-icon name="minus"></ui-icon></button>
    <input type="range" min="0" max="200" value="100" aria-label="Zoom">
    <button class="z" aria-label="Zoom in"><ui-icon name="plus"></ui-icon></button>
    <button class="pct">100%</button>
  `);

  // ---------- taskbar ----------

  define('win-taskbar', `
    <style>
      :host {
        display: flex; align-items: center; flex: none; height: 40px; color: #111;
        background: linear-gradient(90deg, #d2d2d2 0, #d4d3d3 26%, #ddd5d3 32%, #dad5d5 40%, #d7d3db 46%, #ddd5d7 52%, #dad7d4 62%, #d8d7d2 73%, #d3d3d3 77%, #d4d4d4 100%);
      }
      .start { width: 49px; height: 40px; }
      .search { display: flex; align-items: center; gap: 12px; width: 342px; height: 39px; padding-left: 11px; background: #fff; border: 1px solid #c6c6c6; font-size: 15px; }
      .search input { flex: 1; }
      .search input::placeholder { color: #333; opacity: 1; }
      .app { width: 49px; height: 40px; padding-top: 2px; border: 0 solid #0f7bd4; }
      .open { width: 41px; margin: 0 4px; border-bottom-width: 2px; }
      .many { border-image: linear-gradient(90deg, #0f7bd4 80%, #62aae6 80%) 2; }
      .active { width: 48px; background: #f1f0f4; border-bottom-width: 2px; }
      .tray { margin-left: auto; display: flex; align-items: center; }
      .tray button { height: 40px; width: 24px; }
      .tray .lang { width: 36px; }
      .tray .clock { width: 68px; flex-direction: column; line-height: 18px; padding-bottom: 1px; }
      .tray .notice { width: 36px; }
      .peek { width: 4px; height: 40px; margin-left: 10px; border-left: 1px solid #a5a5a5; }
    </style>
    <button class="start" aria-label="Start"><ui-icon name="windows"></ui-icon></button>
    <label class="search"><ui-icon name="search"></ui-icon><input placeholder="Search" aria-label="Search"></label>
    <button class="app" aria-label="Task view" style="margin-right: 3px"><ui-icon name="taskview"></ui-icon></button>
    <button class="app open many" aria-label="File Explorer"><ui-icon name="explorer"></ui-icon></button>
    <button class="app open many" aria-label="Edge"><ui-icon name="edge"></ui-icon></button>
    <button class="app" aria-label="Mail"><ui-icon name="mail"></ui-icon></button>
    <button class="app" aria-label="Firefox"><ui-icon name="firefox"></ui-icon></button>
    <button class="app" aria-label="Dropbox"><ui-icon name="dropbox"></ui-icon></button>
    <button class="app" aria-label="Shop"><ui-icon name="cart"></ui-icon></button>
    <button class="app open" aria-label="Webex"><ui-icon name="webex"></ui-icon></button>
    <button class="app open many" aria-label="WinRAR"><ui-icon name="winrar"></ui-icon></button>
    <button class="app active" aria-label="Excel"><ui-icon name="excel"></ui-icon></button>
    <div class="tray">
      <button aria-label="Hidden icons"><ui-icon name="trayup"></ui-icon></button>
      <button aria-label="OneDrive"><ui-icon name="cloud"></ui-icon></button>
      <button aria-label="Microphone"><ui-icon name="mic"></ui-icon></button>
      <button aria-label="Network"><ui-icon name="network"></ui-icon></button>
      <button aria-label="Volume"><ui-icon name="sound"></ui-icon></button>
      <button aria-label="Ink workspace" style="width: 32px"><ui-icon name="pen"></ui-icon></button>
      <button class="lang">ENG</button>
      <button class="clock"><span>4:44 PM</span><span>29/11/2020</span></button>
      <button class="notice" aria-label="Notifications"><ui-icon name="notice"></ui-icon></button>
      <div class="peek"></div>
    </div>
  `);

  define('excel-app', `
    <style>
      :host { display: flex; flex-direction: column; height: 100vh; background: #e6e6e6; }
    </style>
    <excel-header></excel-header>
    <excel-ribbon></excel-ribbon>
    <formula-bar></formula-bar>
    <sheet-view></sheet-view>
    <sheet-tabs></sheet-tabs>
    <status-bar></status-bar>
    <win-taskbar></win-taskbar>
  `);
</script>
</body>
</html>
